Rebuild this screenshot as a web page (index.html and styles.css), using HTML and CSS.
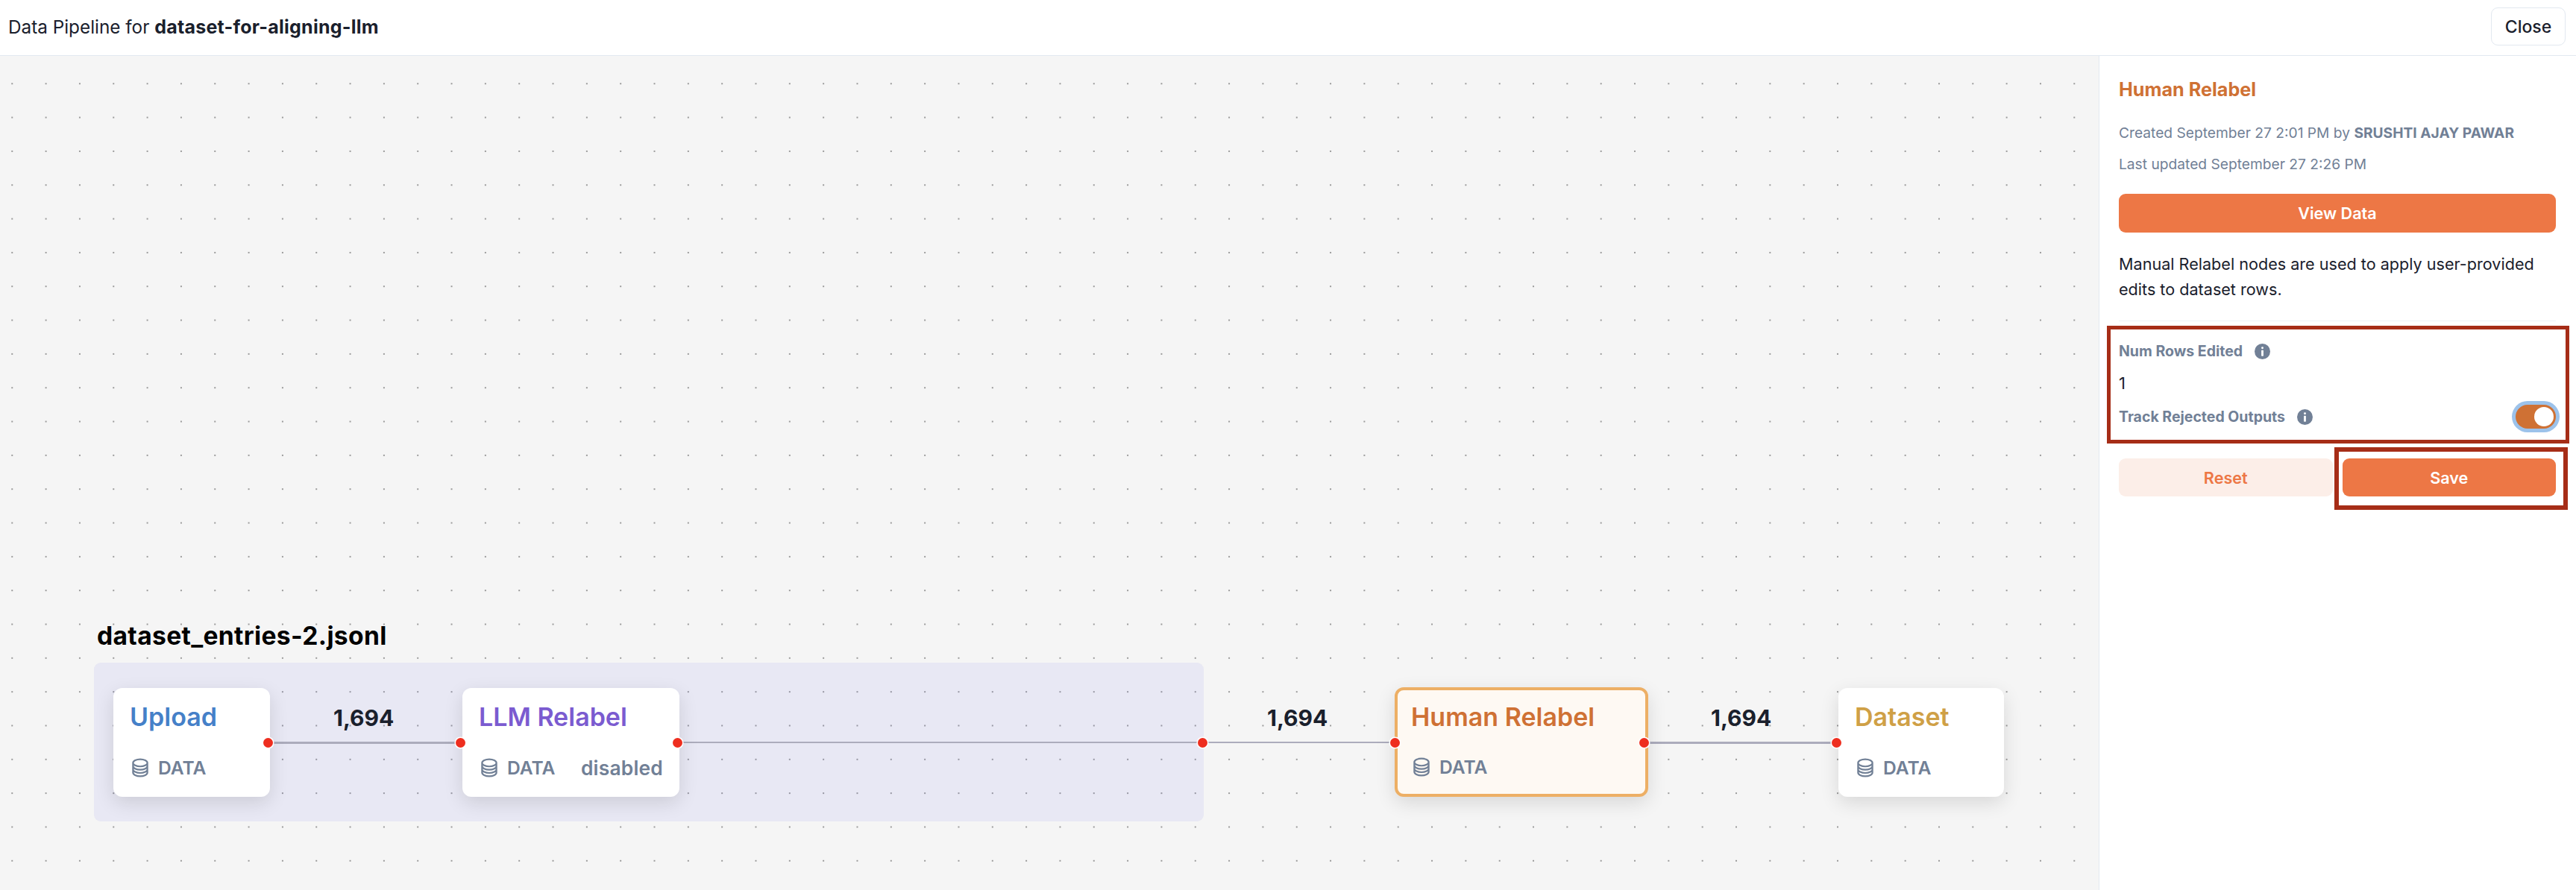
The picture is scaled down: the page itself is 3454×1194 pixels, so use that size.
FILE: index.html
```html
<!DOCTYPE html>
<html lang="en">
<head>
    <meta charset="UTF-8">
    <title>Data Pipeline</title>
    <link rel="stylesheet" href="styles.css">
</head>
<body>
    <svg class="icon-defs" width="0" height="0">
        <symbol id="db" viewBox="0 0 24 24">
            <path fill="none" stroke="currentColor" stroke-width="1.9" stroke-linecap="round" stroke-linejoin="round" d="M20.25 6.375c0 2.278-3.694 4.125-8.25 4.125S3.75 8.653 3.75 6.375m16.5 0c0-2.278-3.694-4.125-8.25-4.125S3.75 4.097 3.75 6.375m16.5 0v11.25c0 2.278-3.694 4.125-8.25 4.125s-8.25-1.847-8.25-4.125V6.375m16.5 0v3.75m-16.5-3.75v3.75m16.5 0v3.75C20.25 16.153 16.556 18 12 18s-8.25-1.847-8.25-4.125v-3.75m16.5 0c0 2.278-3.694 4.125-8.25 4.125s-8.25-1.847-8.25-4.125"/>
        </symbol>
        <symbol id="info" viewBox="0 0 24 24">
            <circle cx="12" cy="12" r="12" fill="currentColor"/>
            <circle cx="12" cy="6.5" r="1.7" fill="#fff"/>
            <rect x="10.4" y="10" width="3.2" height="9" rx="0.8" fill="#fff"/>
        </symbol>
    </svg>

    <header class="topbar">
        <div class="topbar-title">Data Pipeline for <strong>dataset-for-aligning-llm</strong></div>
        <button class="close-btn">Close</button>
    </header>

    <div class="main">
        <div class="canvas">
            <div class="group-label">dataset_entries-2.jsonl</div>
            <div class="group"></div>

            <div class="edge edge-1"></div>
            <div class="edge edge-2"></div>
            <div class="edge edge-3"></div>
            <div class="edge edge-4"></div>

            <div class="edge-label label-1">1,694</div>
            <div class="edge-label label-2">1,694</div>
            <div class="edge-label label-3">1,694</div>

            <div class="node node-upload">
                <div class="node-title">Upload</div>
                <div class="node-foot">
                    <svg class="db-icon"><use href="#db"/></svg>
                    <span>DATA</span>
                </div>
                <i class="handle handle-right"></i>
            </div>

            <div class="node node-llm">
                <div class="node-title">LLM Relabel</div>
                <div class="node-foot">
                    <svg class="db-icon"><use href="#db"/></svg>
                    <span>DATA</span>
                    <span class="disabled">disabled</span>
                </div>
                <i class="handle handle-left"></i>
                <i class="handle handle-right"></i>
            </div>

            <i class="handle handle-group"></i>

            <div class="node node-human">
                <div class="node-title">Human Relabel</div>
                <div class="node-foot">
                    <svg class="db-icon"><use href="#db"/></svg>
                    <span>DATA</span>
                </div>
                <i class="handle handle-left"></i>
                <i class="handle handle-right"></i>
            </div>

            <div class="node node-dataset">
                <div class="node-title">Dataset</div>
                <div class="node-foot">
                    <svg class="db-icon"><use href="#db"/></svg>
                    <span>DATA</span>
                </div>
                <i class="handle handle-left"></i>
            </div>
        </div>

        <aside class="sidebar">
            <h2 class="side-title">Human Relabel</h2>
            <p class="meta">Created September 27 2:01 PM by <strong>SRUSHTI AJAY PAWAR</strong></p>
            <p class="meta">Last updated September 27 2:26 PM</p>
            <button class="btn btn-solid btn-view">View Data</button>
            <p class="desc">Manual Relabel nodes are used to apply user-provided edits to dataset rows.</p>
            <hr class="divider">

            <div class="field-label">
                <span>Num Rows Edited</span>
                <svg class="info-icon"><use href="#info"/></svg>
            </div>
            <div class="field-value">1</div>
            <div class="toggle-row">
                <div class="field-label">
                    <span>Track Rejected Outputs</span>
                    <svg class="info-icon"><use href="#info"/></svg>
                </div>
                <div class="toggle"><i class="toggle-knob"></i></div>
            </div>

            <div class="actions">
                <button class="btn btn-soft">Reset</button>
                <button class="btn btn-solid">Save</button>
            </div>

            <div class="mark mark-fields"></div>
            <div class="mark mark-save"></div>
        </aside>
    </div>
</body>
</html>
```

FILE: styles.css
```css
* {
    box-sizing: border-box;
}
html, body {
    height: 100%;
}
body {
    margin: 0;
    display: flex;
    flex-direction: column;
    font-family: Inter, "Liberation Sans", sans-serif;
    color: #1a202c;
    background: #fff;
    overflow: hidden;
}
.icon-defs {
    position: absolute;
}

/* top bar */
.topbar {
    height: 75px;
    flex: none;
    display: flex;
    align-items: center;
    justify-content: space-between;
    padding: 0 14px 3px 11px;
    border-bottom: 1px solid #e2e8f0;
}
.topbar-title {
    font-size: 24.3px;
}
.topbar-title strong {
    font-size: 25px;
    font-weight: 700;
    letter-spacing: 0.25px;
}
.close-btn {
    width: 100px;
    height: 51px;
    font: 500 23px Inter, sans-serif;
    color: #1a202c;
    background: #fff;
    border: 1px solid #e2e8f0;
    border-radius: 9px;
}

.main {
    flex: 1;
    display: flex;
    min-height: 0;
}

/* canvas */
.canvas {
    flex: 1;
    position: relative;
    background-color: #f5f5f5;
    background-image: radial-gradient(circle, #9a9a9a 1.3px, transparent 1.5px);
    background-size: 45.33px 45.33px;
    background-position: -6.4px 14.6px;
}
.group-label {
    position: absolute;
    left: 130px;
    top: 757px;
    font-size: 33.6px;
    line-height: 42px;
    font-weight: 700;
    letter-spacing: 0.35px;
    color: #000;
}
.group {
    position: absolute;
    left: 126px;
    top: 814px;
    width: 1488px;
    height: 213px;
    border-radius: 9px;
    background: rgba(115, 115, 235, 0.1);
}
.edge {
    position: absolute;
    top: 920px;
    height: 2px;
    background: #acacbc;
}
.edge-1 {
    left: 360px;
    width: 258px;
    height: 3px;
}
.edge-2 {
    left: 910px;
    width: 702px;
}
.edge-3 {
    left: 1612px;
    width: 256px;
}
.edge-4 {
    left: 2208px;
    width: 256px;
    height: 3px;
}
.edge-label {
    position: absolute;
    top: 868px;
    font-size: 30px;
    line-height: 40px;
    font-weight: 700;
    color: #1a202c;
}
.label-1 {
    left: 447px;
}
.label-2 {
    left: 1699px;
}
.label-3 {
    left: 2294px;
}

/* nodes */
.node {
    position: absolute;
    top: 848px;
    height: 146px;
    padding: 22px;
    display: flex;
    flex-direction: column;
    justify-content: space-between;
    background: #fff;
    border-radius: 12px;
    box-shadow: 0 8px 26px rgba(0, 0, 0, 0.12);
}
.node-upload {
    left: 152px;
    width: 210px;
}
.node-llm {
    left: 620px;
    width: 291px;
}
.node-human {
    left: 1870px;
    top: 847px;
    width: 340px;
    height: 147px;
    padding: 19px 18px;
    background: #fef9f3;
    border: 4px solid #edaf65;
}
.node-dataset {
    left: 2465px;
    width: 222px;
}
.node-title {
    font-size: 34px;
    line-height: 34px;
    font-weight: 600;
}
.node-upload .node-title {
    color: #4580c8;
}
.node-llm .node-title {
    color: #7b5bd0;
}
.node-human .node-title {
    color: #cf7134;
}
.node-dataset .node-title {
    color: #cfa046;
}
.node-foot {
    display: flex;
    align-items: center;
    gap: 10px;
    height: 34px;
    font-size: 24.6px;
    font-weight: 600;
    color: #718096;
}
.db-icon {
    width: 28px;
    height: 28px;
    color: #718096;
}
.disabled {
    margin-left: auto;
    font-size: 26.4px;
    letter-spacing: 0.2px;
}
.handle {
    position: absolute;
    width: 13px;
    height: 13px;
    border-radius: 50%;
    background: #ee2e1f;
    box-shadow: 0 0 0 1.5px #fff;
}
.node .handle {
    top: 66.5px;
}
.node-human .handle {
    top: 63.5px;
}
.handle-left {
    left: -9px;
}
.handle-right {
    right: -4px;
}
.node-human .handle-left {
    left: -10px;
}
.node-human .handle-right {
    right: -5px;
}
.handle-group {
    left: 1605.5px;
    top: 914.5px;
}

/* side panel */
.sidebar {
    width: 640px;
    flex: none;
    position: relative;
    padding: 29px 27px 0 26px;
    border-left: 1px solid #e2e8f0;
    background: #fff;
}
.side-title {
    margin: 0 0 30px;
    font-size: 25.2px;
    line-height: 32px;
    font-weight: 700;
    color: #cf7134;
}
.meta {
    margin: 0 0 18px;
    font-size: 19.2px;
    line-height: 24px;
    color: #718096;
}
.meta strong {
    font-weight: 700;
}
.btn {
    height: 51px;
    font: 600 21.6px Inter, sans-serif;
    border: none;
    border-radius: 9px;
}
.btn-solid {
    color: #fff;
    background: #ed7745;
}
.btn-soft {
    color: #ed7745;
    background: #fceee8;
}
.btn-view {
    display: block;
    width: 100%;
    height: 52px;
    margin-top: 28px;
}
.desc {
    margin: 25px 0 0;
    font-size: 21.6px;
    line-height: 34px;
    color: #1a202c;
}
.divider {
    margin: 25px 0 0;
    border: none;
    border-top: 1px solid #edf2f7;
}
.field-label {
    display: flex;
    align-items: center;
    gap: 16px;
    height: 24px;
    font-size: 19.5px;
    font-weight: 700;
    color: #718096;
}
.divider + .field-label {
    margin-top: 28px;
}
.info-icon {
    width: 21px;
    height: 21px;
    color: #718096;
}
.field-value {
    margin-top: 17px;
    font-size: 22px;
    line-height: 28px;
}
.toggle-row {
    display: flex;
    align-items: center;
    justify-content: space-between;
    margin-top: 15px;
}
.toggle {
    width: 54px;
    height: 32px;
    padding: 3px;
    display: flex;
    justify-content: flex-end;
    border-radius: 16px;
    background: #cf7134;
    box-shadow: 0 0 0 5px #9cc2ea;
}
.toggle-knob {
    width: 26px;
    height: 26px;
    border-radius: 50%;
    background: #fff;
}
.actions {
    display: grid;
    grid-template-columns: 1fr 1fr;
    gap: 13px;
    margin-top: 40px;
}

/* annotation boxes drawn over the panel */
.mark {
    position: absolute;
    border: 5px solid #a62d17;
}
.mark-fields {
    left: 10px;
    top: 362px;
    width: 620px;
    height: 158px;
}
.mark-save {
    left: 315px;
    top: 525px;
    width: 313px;
    height: 84px;
    border-width: 6px;
}
```
